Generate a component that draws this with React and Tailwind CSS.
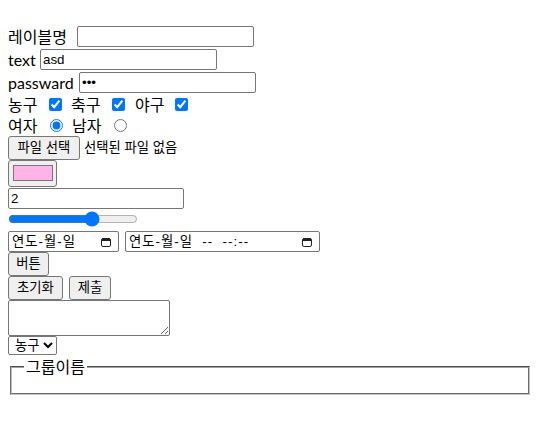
import { useState } from 'react'

const labelFont = "font-['Lato','Noto_Sans_CJK_KR',sans-serif]"
const controlFont = "font-['Liberation_Sans','Noto_Sans_CJK_KR',sans-serif]"

const boxClass =
  'h-[21px] rounded-[2px] border border-[#767676] bg-white px-[2px] text-[13.33px] text-black outline-none'
const buttonClass =
  'h-[24px] rounded-[3px] border border-[#767676] bg-[#efefef] px-[6px] text-[13.33px] leading-none text-black'

function CalendarIcon() {
  return (
    <svg width="10" height="10" viewBox="0 0 10 10" className="shrink-0">
      <rect x="0.5" y="1.5" width="9" height="8" rx="1.5" fill="none" stroke="#222" strokeWidth="1" />
      <rect x="1" y="1.5" width="8" height="2.5" fill="#222" />
    </svg>
  )
}

function App() {
  const [range, setRange] = useState(67)

  return (
    <div className={`${labelFont} px-[8px] pt-[25px] text-[16px] text-black`}>
      <div className="flex h-[23px] items-center">
        <span className="w-[69px] whitespace-nowrap">레이블명</span>
        <input type="text" className={`${boxClass} ${controlFont} w-[177px]`} />
      </div>
      <div className="flex h-[23px] items-center">
        <span className="w-[32px] whitespace-nowrap">text</span>
        <input type="text" defaultValue="asd" className={`${boxClass} ${controlFont} w-[177px]`} />
      </div>
      <div className="flex h-[23px] items-center">
        <span className="w-[71px] whitespace-nowrap">passward</span>
        <input type="password" defaultValue="asd" className={`${boxClass} ${controlFont} w-[177px]`} />
      </div>
      <div className="flex h-[21px] items-center">
        <span className="w-[41px]">농구</span>
        <input type="checkbox" defaultChecked className="h-[13px] w-[13px]" />
        <span className="w-[50px] pl-[9px]">축구</span>
        <input type="checkbox" defaultChecked className="h-[13px] w-[13px]" />
        <span className="w-[50px] pl-[10px]">야구</span>
        <input type="checkbox" defaultChecked className="h-[13px] w-[13px]" />
      </div>
      <div className="flex h-[21px] items-center">
        <span className="w-[42px]">여자</span>
        <input type="radio" name="gender" defaultChecked className="h-[13px] w-[13px]" />
        <span className="w-[51px] pl-[9px]">남자</span>
        <input type="radio" name="gender" className="h-[13px] w-[13px]" />
      </div>
      <div className="flex h-[23px] items-center">
        <button type="button" className={`${buttonClass} ${controlFont} h-[22px] w-[72px]`}>
          파일 선택
        </button>
        <span className={`${controlFont} ml-[4px] text-[13.33px]`}>선택된 파일 없음</span>
      </div>
      <div className="flex h-[28px] items-center">
        <div className="flex h-[27px] w-[49px] items-center justify-center rounded-[3px] border border-[#767676] bg-[#efefef]">
          <div className="h-[16px] w-[40px] border border-[#777] bg-[#ffb3e7]" />
        </div>
      </div>
      <div className="flex h-[22px] items-center">
        <input type="number" defaultValue="2" className={`${boxClass} ${controlFont} w-[176px]`} />
      </div>
      <div className="flex h-[20px] items-center">
        <input
          type="range"
          value={range}
          onChange={(event) => setRange(event.target.value)}
          className="w-[130px]"
        />
      </div>
      <div className={`${controlFont} mt-[2px] flex h-[21px] items-center text-[13.33px]`}>
        <div className="flex h-[21px] w-[111px] items-center justify-between rounded-[2px] border border-[#767676] bg-white pl-[3px] pr-[7px]">
          <span className="tracking-[1px]">연도-월-일</span>
          <CalendarIcon />
        </div>
        <div className="ml-[6px] flex h-[21px] w-[195px] items-center justify-between rounded-[2px] border border-[#767676] bg-white pl-[3px] pr-[7px]">
          <span className="whitespace-pre tracking-[1px]">연도-월-일  --  --:--</span>
          <CalendarIcon />
        </div>
      </div>
      <div className="flex h-[24px] items-center">
        <button type="button" className={`${buttonClass} ${controlFont} w-[41px]`}>
          버튼
        </button>
      </div>
      <div className="flex h-[24px] items-center gap-[6px]">
        <button type="reset" className={`${buttonClass} ${controlFont} w-[55px]`}>
          초기화
        </button>
        <button type="submit" className={`${buttonClass} ${controlFont} w-[42px]`}>
          제출
        </button>
      </div>
      <div className="flex h-[36px] items-start">
        <textarea className={`${controlFont} h-[36px] w-[162px] resize rounded-[2px] border border-[#767676] bg-white text-[13.33px]`} />
      </div>
      <div className="flex h-[20px] items-start">
        <select className={`${controlFont} h-[19px] w-[49px] rounded-[2px] border border-[#767676] bg-white pl-[2px] text-[13.33px]`}>
          <option>농구</option>
          <option>축구</option>
          <option>야구</option>
        </select>
      </div>
      <fieldset className="mx-[2px] mt-[3px] h-[36px] border-2 border-[#c0c0c0] border-t-[#a0a0a0] px-[12px] [border-style:groove]">
        <legend className="px-[2px] text-[16px] leading-[16px]">그룹이름</legend>
      </fieldset>
    </div>
  )
}

export default App
